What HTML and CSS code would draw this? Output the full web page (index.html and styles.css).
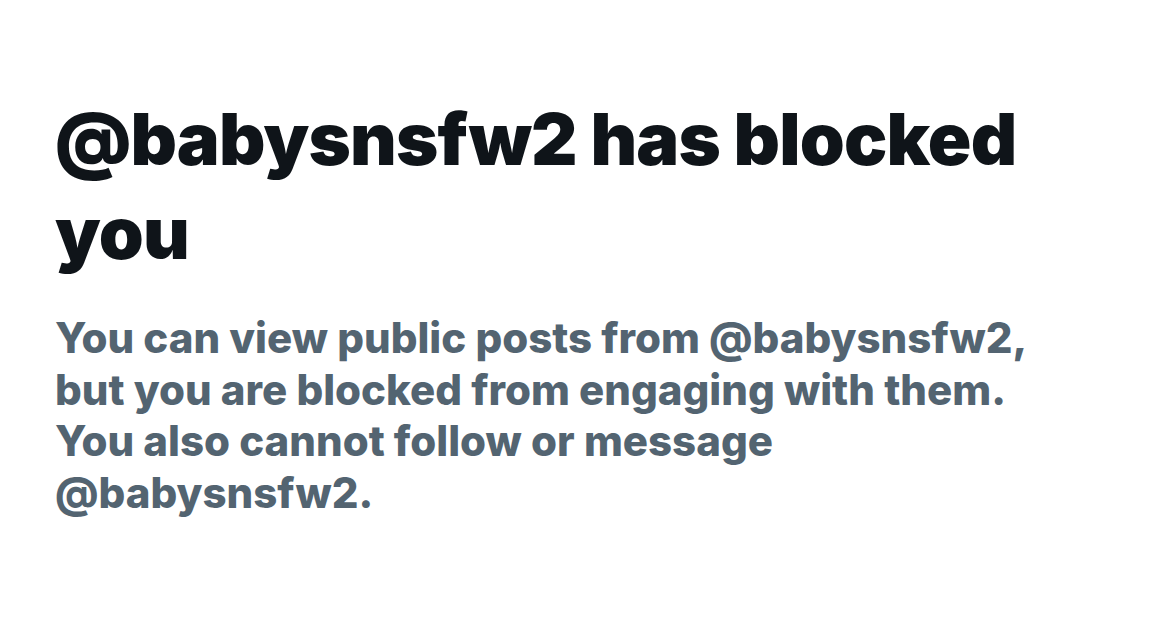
FILE: index.html
```html
<!DOCTYPE html>
<html lang="en">
<head>
<meta charset="utf-8">
<link rel="stylesheet" href="styles.css">
</head>
<body>
<main class="blocked">
  <h1 class="blocked-title">@babysnsfw2 has blocked you</h1>
  <p class="blocked-text">You can view public posts from @babysnsfw2, but you are blocked from engaging with them. You also cannot follow or message @babysnsfw2.</p>
</main>
</body>
</html>
```
FILE: styles.css
```css
html, body {
  margin: 0;
  padding: 0;
  background: #ffffff;
}
.blocked {
  padding: 92px 40px 0 55px;
  width: 1060px;
  font-family: Inter, "Noto Sans", sans-serif;
}
.blocked-title {
  margin: 0;
  font-size: 72px;
  line-height: 94px;
  font-weight: 900;
  color: #0f1419;
  letter-spacing: -0.8px;
  width: 1060px;
}
.blocked-text {
  margin: 32px 0 0;
  font-size: 42px;
  line-height: 51.5px;
  font-weight: 800;
  color: #536471;
  letter-spacing: 0;
  width: 1000px;
}
```
